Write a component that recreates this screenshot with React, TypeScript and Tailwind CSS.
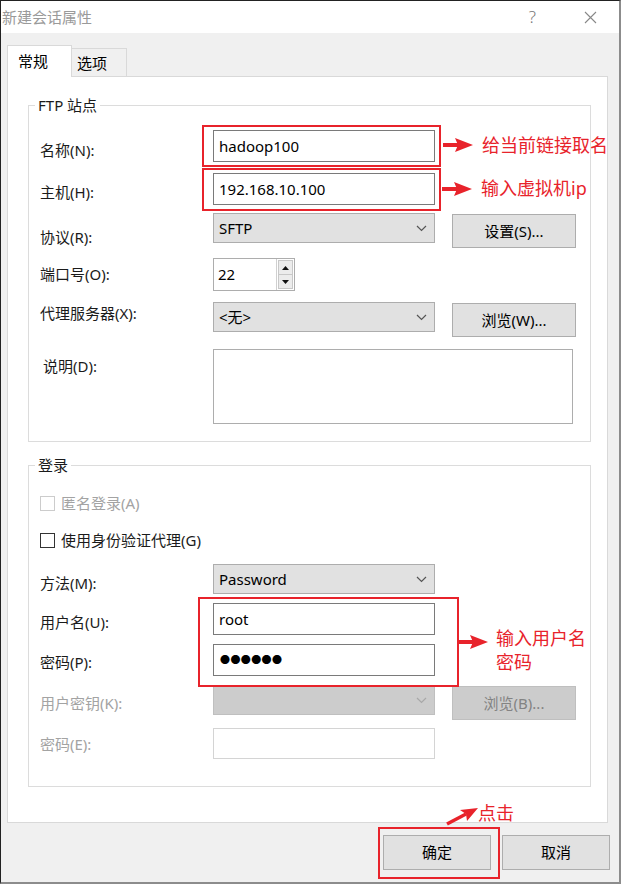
import type { ReactNode } from 'react'

// Session properties dialog (常规 tab) with red tutorial annotations on top.

const RED = '#e8232b'

function Chevron({ disabled }: { disabled?: boolean }) {
  return (
    <svg width="11" height="7" viewBox="0 0 11 7" aria-hidden="true">
      <path d="M1 1l4.5 4.5L10 1" fill="none" stroke={disabled ? '#a8a8a8' : '#555'} strokeWidth="1.2" />
    </svg>
  )
}

function Label({ children, className, disabled }: { children: ReactNode; className: string; disabled?: boolean }) {
  return (
    <div
      className={
        (disabled ? 'text-[#a3a3a3] ' : 'text-[#1b1b1b] ') +
        'w-[173px] shrink-0 text-[15px] leading-[20px] ' +
        className
      }
    >
      {children}
    </div>
  )
}

function Input({ value, disabled, className }: { value?: ReactNode; disabled?: boolean; className?: string }) {
  return (
    <div
      className={
        (disabled ? 'border-[#d4d4d4] ' : 'border-[#7a7a7a] ') +
        'flex w-[222px] items-center border bg-white pl-[5px] text-[15px] text-black ' +
        (className ?? 'h-[32px]')
      }
    >
      {value}
    </div>
  )
}

function Select({ value, disabled }: { value?: string; disabled?: boolean }) {
  return (
    <div
      className={
        disabled
          ? 'flex h-[30px] w-[222px] items-center justify-between border border-[#bfbfbf] bg-[#cccccc] pl-[5px] pr-[7px]'
          : 'flex h-[30px] w-[222px] items-center justify-between border border-[#adadad] bg-[#e1e1e1] pl-[5px] pr-[7px]'
      }
    >
      <span className="text-[15px] text-black">{value}</span>
      <Chevron disabled={disabled} />
    </div>
  )
}

function Btn({ children, disabled }: { children: ReactNode; disabled?: boolean }) {
  return (
    <div
      className={
        disabled
          ? 'ml-[17px] mt-[1px] flex h-[34px] w-[124px] items-center justify-center border border-[#bfbfbf] bg-[#cccccc] text-[15px] text-[#838383]'
          : 'ml-[17px] mt-[1px] flex h-[34px] w-[124px] items-center justify-center border border-[#adadad] bg-[#e1e1e1] text-[15px] text-black'
      }
    >
      {children}
    </div>
  )
}

function Checkbox({ label, disabled }: { label: string; disabled?: boolean }) {
  return (
    <div className="flex h-[20px] items-center">
      <span
        className={
          disabled
            ? 'h-[15px] w-[15px] border border-[#cccccc] bg-white'
            : 'h-[15px] w-[15px] border border-[#333] bg-white'
        }
      />
      <span className={disabled ? 'ml-[6px] text-[15px] text-[#a3a3a3]' : 'ml-[6px] text-[15px] text-[#1b1b1b]'}>
        {label}
      </span>
    </div>
  )
}

function Arrow() {
  return (
    <svg width="30" height="16" viewBox="0 0 30 16" aria-hidden="true">
      <rect x="0" y="6" width="16" height="4" fill={RED} />
      <path d="M12 1 L30 8 L12 15 L15 8 Z" fill={RED} />
    </svg>
  )
}

const note = 'absolute text-[18px] leading-[24px] text-[#e8232b] [text-shadow:0_0_2px_#fff,0_0_2px_#fff,0_0_3px_#fff]'

export default function App() {
  return (
    <div className="relative h-[885px] w-[625px] overflow-hidden bg-white [font-family:'Noto_Sans','Noto_Sans_CJK_SC',sans-serif]">
      <div className="flex h-[884px] w-[621px] flex-col border-l border-t border-b-2 border-r-2 border-l-[#222] border-t-[#222] border-b-[#8c8c8c] border-r-[#8c8c8c] bg-[#f0f0f0]">
        {/* title bar */}
        <div className="flex h-[32px] shrink-0 items-center bg-white pl-[1px]">
          <span className="text-[15px] text-[#9a9a9a]">新建会话属性</span>
          <span className="ml-auto text-[17px] font-light text-[#777]">?</span>
          <svg className="ml-[48px] mr-[22px]" width="13" height="13" viewBox="0 0 13 13" aria-hidden="true">
            <path d="M1 1L12 12M12 1L1 12" stroke="#888" strokeWidth="1.1" />
          </svg>
        </div>

        <div className="pl-[6px] pt-[12px]">
          {/* tabs */}
          <div className="flex h-[31px] items-end">
            <div className="relative z-10 -mb-px flex h-[32px] w-[65px] items-center border border-b-0 border-[#d9d9d9] bg-white pl-[10px] text-[15px] text-black">
              常规
            </div>
            <div className="flex h-[28px] w-[55px] items-center border border-l-0 border-b-0 border-[#d9d9d9] bg-[#f0f0f0] pl-[5px] pt-[2px] text-[15px] text-black">
              选项
            </div>
          </div>

          {/* tab panel */}
          <div className="h-[747px] w-[601px] border border-[#d9d9d9] bg-white pl-[20px] pt-[28px]">
            {/* FTP 站点 */}
            <div className="relative h-[337px] w-[563px] border border-[#dcdcdc] pl-[11px]">
              <span className="absolute -top-[12px] left-[6px] bg-white px-[3px] text-[15px] text-[#1b1b1b]">FTP 站点</span>

              <div className="mt-[24px] flex">
                <Label className="pt-[10px]">名称(N):</Label>
                <Input value="hadoop100" />
              </div>
              <div className="mt-[11px] flex">
                <Label className="pt-[9px]">主机(H):</Label>
                <Input value="192.168.10.100" />
              </div>
              <div className="mt-[8px] flex">
                <Label className="pt-[14px]">协议(R):</Label>
                <Select value="SFTP" />
                <Btn>设置(S)...</Btn>
              </div>
              <div className="mt-[10px] flex">
                <Label className="pt-[6px]">端口号(O):</Label>
                <div className="flex h-[33px] w-[82px] border border-[#adadad] bg-white">
                  <div className="flex w-[63px] items-center pl-[4px] text-[15px] text-black">22</div>
                  <div className="flex w-[18px] flex-col border-l border-[#d0d0d0] p-px">
                    <div className="flex flex-1 items-center justify-center border border-[#c8c8c8] bg-[#ececec]">
                      <svg width="7" height="4" viewBox="0 0 7 4" aria-hidden="true"><path d="M0 4L3.5 0L7 4Z" fill="#111" /></svg>
                    </div>
                    <div className="flex flex-1 items-center justify-center border border-t-0 border-[#c8c8c8] bg-[#ececec]">
                      <svg width="7" height="4" viewBox="0 0 7 4" aria-hidden="true"><path d="M0 0L3.5 4L7 0Z" fill="#111" /></svg>
                    </div>
                  </div>
                </div>
              </div>
              <div className="mt-[11px] flex">
                <Label className="pt-[1px]">代理服务器(X):</Label>
                <Select value="<无>" />
                <Btn>浏览(W)...</Btn>
              </div>
              <div className="mt-[12px] flex">
                <Label className="pl-[3px] pt-[7px]">说明(D):</Label>
                <div className="h-[75px] w-[360px] border border-[#adadad] bg-white" />
              </div>
            </div>

            {/* 登录 */}
            <div className="relative mt-[23px] h-[322px] w-[563px] border border-[#dcdcdc] pl-[11px]">
              <span className="absolute -top-[12px] left-[6px] bg-white px-[3px] text-[15px] text-[#1b1b1b]">登录</span>

              <div className="mt-[27px]">
                <Checkbox label="匿名登录(A)" disabled />
              </div>
              <div className="mt-[17px]">
                <Checkbox label="使用身份验证代理(G)" />
              </div>
              <div className="mt-[14px] flex">
                <Label className="pt-[9px]">方法(M):</Label>
                <Select value="Password" />
              </div>
              <div className="mt-[9px] flex">
                <Label className="pt-[9px]">用户名(U):</Label>
                <Input value="root" />
              </div>
              <div className="mt-[9px] flex">
                <Label className="pt-[8px]">密码(P):</Label>
                <Input value={<span className="pl-[1px] text-[10px] tracking-[0.4px]">●●●●●●</span>} />
              </div>
              <div className="mt-[9px] flex">
                <Label className="pt-[8px]" disabled>用户密钥(K):</Label>
                <Select disabled />
                <Btn disabled>浏览(B)...</Btn>
              </div>
              <div className="mt-[8px] flex">
                <Label className="pt-[6px]" disabled>密码(E):</Label>
                <Input disabled className="h-[31px]" />
              </div>
            </div>
          </div>

          {/* dialog buttons */}
          <div className="mt-[12px] flex justify-end gap-[11px] pr-[9px]">
            <div className="flex h-[35px] w-[108px] items-center justify-center border border-[#adadad] bg-[#e1e1e1] text-[15px] text-black">
              确定
            </div>
            <div className="flex h-[35px] w-[108px] items-center justify-center border border-[#adadad] bg-[#e1e1e1] text-[15px] text-black">
              取消
            </div>
          </div>
        </div>
      </div>

      {/* tutorial annotations */}
      <div className="absolute left-[202px] top-[125px] h-[42px] w-[239px] border-2 border-[#e8232b]" />
      <div className="absolute left-[202px] top-[168px] h-[43px] w-[239px] border-2 border-[#e8232b]" />
      <div className="absolute left-[198px] top-[597px] h-[90px] w-[261px] border-2 border-[#e8232b]" />
      <div className="absolute left-[378px] top-[827px] h-[52px] w-[122px] border-2 border-[#e8232b]" />

      <div className="absolute left-[443px] top-[137px]"><Arrow /></div>
      <div className="absolute left-[442px] top-[181px]"><Arrow /></div>
      <div className="absolute left-[458px] top-[634px]"><Arrow /></div>
      <svg className="absolute left-[444px] top-[804px]" width="36" height="24" viewBox="0 0 36 24" aria-hidden="true">
        <path d="M3 20 L22 10" stroke={RED} strokeWidth="3.5" />
        <path d="M34 4 L16 6 L22 10 L23 17 Z" fill={RED} />
      </svg>

      <span className={note + ' left-[482px] top-[133px]'}>给当前链接取名</span>
      <span className={note + ' left-[481px] top-[176px]'}>输入虚拟机ip</span>
      <span className={note + ' left-[496px] top-[626px]'}>输入用户名<br />密码</span>
      <span className={note + ' left-[478px] top-[801px]'}>点击</span>
    </div>
  )
}
